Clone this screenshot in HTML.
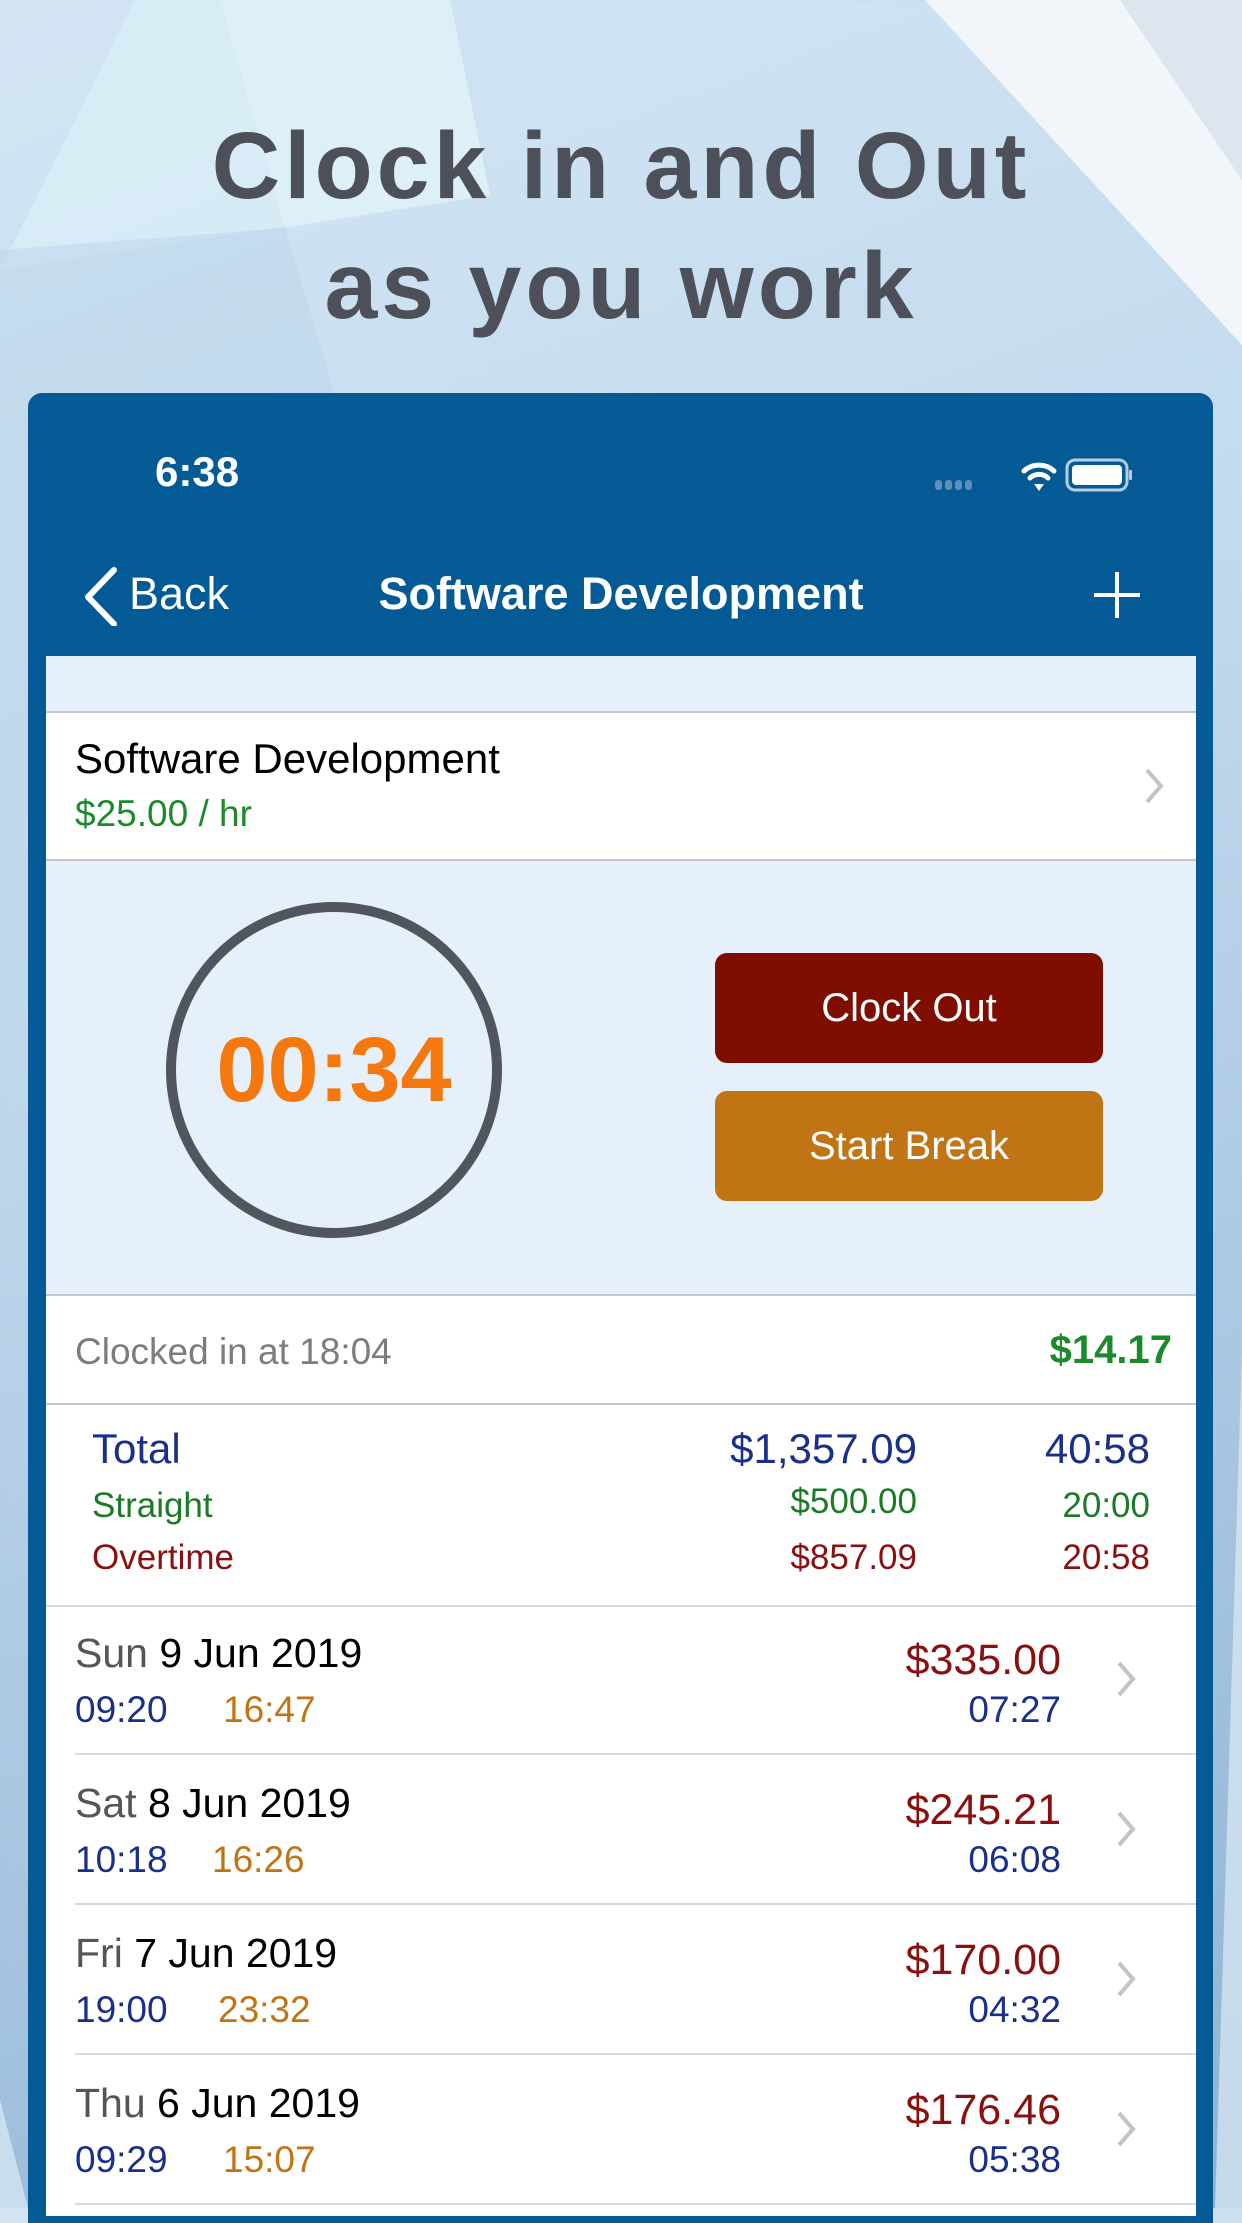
<!DOCTYPE html>
<html><head><meta charset="utf-8"><style>
*{margin:0;padding:0;box-sizing:border-box}
body{width:1242px;height:2208px;overflow:hidden;font-family:"Liberation Sans",sans-serif;position:relative;background:linear-gradient(160deg,#d3e5f3 0%,#c3dbef 35%,#a9c6e0 70%,#8fb3d4 100%)}
.abs{position:absolute}
.t{position:absolute;white-space:nowrap}
</style></head><body>
<svg class="abs" style="left:0;top:0" width="1242" height="2208">
<polygon points="0,270 135,0 450,0 490,195" fill="#d9edf6" opacity=".8"/>
<polygon points="220,0 450,0 490,195 285,228" fill="#e0f2f8" opacity=".7"/>
<polygon points="925,0 1120,0 1242,180 1242,345" fill="#f2f6fa"/>
<polygon points="1120,0 1242,0 1242,180" fill="#dde6ef"/>
<polygon points="285,228 500,950 0,1000 0,250" fill="#bcd6ec" opacity=".5"/>
<polygon points="1242,1350 1242,2208 1215,2208" fill="#e8f1f8" opacity=".6"/>
<polygon points="0,2100 28,2208 0,2208" fill="#e8f1f8" opacity=".6"/>
</svg>
<div class="t" style="left:0;width:1242px;text-align:center;top:106px;font-size:95px;font-weight:bold;color:#4d5058;letter-spacing:4px;line-height:120px">Clock in and Out<br>as you work</div>

<div class="abs" style="left:28px;top:393px;width:1185px;height:1830px;background:#035a94;border-radius:14px 14px 0 0"></div>
<div class="t" style="left:155px;top:448px;font-size:42px;font-weight:bold;color:#fff">6:38</div>
<svg class="abs" style="left:930px;top:455px" width="210" height="40">
<g fill="#5f8fb8"><rect x="5" y="25" width="7" height="10" rx="3"/><rect x="15" y="25" width="7" height="10" rx="3"/><rect x="25" y="25" width="7" height="10" rx="3"/><rect x="35" y="25" width="7" height="10" rx="3"/></g>
<g fill="none" stroke="#fff" stroke-width="5" stroke-linecap="round"><path d="M94 16 a22 22 0 0 1 30 0"/><path d="M100 23 a13 13 0 0 1 18 0"/></g>
<path d="M104 29 L114 29 L109 36 Z" fill="#fff"/>
<rect x="137" y="5" width="60" height="30" rx="8" fill="none" stroke="#b8cde0" stroke-width="3"/>
<rect x="142" y="10" width="50" height="20" rx="4" fill="#fff"/>
<rect x="199" y="15" width="3" height="10" rx="1" fill="#b8cde0"/>
</svg>
<svg class="abs" style="left:78px;top:566px" width="40" height="60"><path d="M36 4 L10 31 L36 58" fill="none" stroke="#fff" stroke-width="6" stroke-linecap="round" stroke-linejoin="round"/></svg>
<div class="t" style="left:129px;top:568px;font-size:45px;color:#fff">Back</div>
<div class="t" style="left:0;width:1242px;text-align:center;top:568px;font-size:45px;font-weight:bold;color:#fff">Software Development</div>
<svg class="abs" style="left:1092px;top:570px" width="50" height="50"><path d="M25 2V48M2 25H48" stroke="#fff" stroke-width="4"/></svg>

<div class="abs" style="left:46px;top:656px;width:1150px;height:1560px;background:#fff"></div>
<div class="abs" style="left:46px;top:656px;width:1150px;height:57px;background:#e6f0fa;border-bottom:2px solid #c8c8cc"></div>
<div class="t" style="left:75px;top:735px;font-size:42px;color:#000">Software Development</div>
<div class="t" style="left:75px;top:793px;font-size:37px;color:#1a8a2a">$25.00 / hr</div>
<svg class="abs" style="left:1143px;top:766px" width="24" height="40"><path d="M4 4 L18 20 L4 36" fill="none" stroke="#c4c4c8" stroke-width="4"/></svg>

<div class="abs" style="left:46px;top:859px;width:1150px;height:437px;background:#e6f0fa;border-top:2px solid #c8c8cc;border-bottom:2px solid #c8c8cc"></div>
<svg class="abs" style="left:160px;top:896px" width="348" height="348"><circle cx="174" cy="174" r="163" fill="none" stroke="#50555e" stroke-width="10"/></svg>
<div class="t" style="left:160px;width:348px;text-align:center;top:1018px;font-size:92px;font-weight:bold;color:#f5780f">00:34</div>
<div class="abs" style="left:715px;top:953px;width:388px;height:110px;background:#800e00;border-radius:12px;color:#fff;font-size:40px;text-align:center;line-height:110px">Clock Out</div>
<div class="abs" style="left:715px;top:1091px;width:388px;height:110px;background:#c07414;border-radius:12px;color:#fff;font-size:40px;text-align:center;line-height:110px">Start Break</div>

<div class="t" style="left:75px;top:1331px;font-size:37px;color:#7c7c80">Clocked in at 18:04</div>
<div class="t" style="right:70px;top:1328px;font-size:40px;font-weight:bold;color:#1a8a2a">$14.17</div>
<div class="abs" style="left:46px;top:1403px;width:1150px;height:2px;background:#c8c8cc"></div>

<div class="t" style="left:92px;top:1425px;font-size:42px;color:#1a2f8a">Total</div>
<div class="t" style="right:325px;top:1425px;font-size:42px;color:#1a2f8a">$1,357.09</div>
<div class="t" style="right:92px;top:1425px;font-size:42px;color:#1a2f8a">40:58</div>
<div class="t" style="left:92px;top:1486px;font-size:35px;color:#1a7a25">Straight</div>
<div class="t" style="right:325px;top:1482px;font-size:35px;color:#1a7a25">$500.00</div>
<div class="t" style="right:92px;top:1486px;font-size:35px;color:#1a7a25">20:00</div>
<div class="t" style="left:92px;top:1538px;font-size:35px;color:#8a1010">Overtime</div>
<div class="t" style="right:325px;top:1538px;font-size:35px;color:#8a1010">$857.09</div>
<div class="t" style="right:92px;top:1538px;font-size:35px;color:#8a1010">20:58</div>

<div class="abs" style="left:46px;top:1605px;width:1150px;height:2px;background:#dadade"></div>
<div class="abs" style="left:75px;top:1605px;width:1121px;height:600px">
 <div class="abs" style="left:0;top:0;width:1121px;height:150px;border-bottom:2px solid #dadade">
  <div class="t" style="left:0;top:25px;font-size:41px;color:#000"><span style="color:#555">Sun</span> 9 Jun 2019</div>
  <div class="t" style="left:0;top:84px;font-size:37px;color:#1a2f8a">09:20</div>
  <div class="t" style="left:148px;top:84px;font-size:37px;color:#c07414">16:47</div>
  <div class="t" style="right:135px;top:31px;font-size:43px;color:#8a1010">$335.00</div>
  <div class="t" style="right:135px;top:84px;font-size:37px;color:#1a2f8a">07:27</div>
  <svg class="abs" style="left:1040px;top:54px" width="24" height="40"><path d="M4 4 L18 20 L4 36" fill="none" stroke="#c4c4c8" stroke-width="4"/></svg>
 </div>
 <div class="abs" style="left:0;top:150px;width:1121px;height:150px;border-bottom:2px solid #dadade">
  <div class="t" style="left:0;top:25px;font-size:41px;color:#000"><span style="color:#555">Sat</span> 8 Jun 2019</div>
  <div class="t" style="left:0;top:84px;font-size:37px;color:#1a2f8a">10:18</div>
  <div class="t" style="left:137px;top:84px;font-size:37px;color:#c07414">16:26</div>
  <div class="t" style="right:135px;top:31px;font-size:43px;color:#8a1010">$245.21</div>
  <div class="t" style="right:135px;top:84px;font-size:37px;color:#1a2f8a">06:08</div>
  <svg class="abs" style="left:1040px;top:54px" width="24" height="40"><path d="M4 4 L18 20 L4 36" fill="none" stroke="#c4c4c8" stroke-width="4"/></svg>
 </div>
 <div class="abs" style="left:0;top:300px;width:1121px;height:150px;border-bottom:2px solid #dadade">
  <div class="t" style="left:0;top:25px;font-size:41px;color:#000"><span style="color:#555">Fri</span> 7 Jun 2019</div>
  <div class="t" style="left:0;top:84px;font-size:37px;color:#1a2f8a">19:00</div>
  <div class="t" style="left:143px;top:84px;font-size:37px;color:#c07414">23:32</div>
  <div class="t" style="right:135px;top:31px;font-size:43px;color:#8a1010">$170.00</div>
  <div class="t" style="right:135px;top:84px;font-size:37px;color:#1a2f8a">04:32</div>
  <svg class="abs" style="left:1040px;top:54px" width="24" height="40"><path d="M4 4 L18 20 L4 36" fill="none" stroke="#c4c4c8" stroke-width="4"/></svg>
 </div>
 <div class="abs" style="left:0;top:450px;width:1121px;height:150px;border-bottom:2px solid #dadade">
  <div class="t" style="left:0;top:25px;font-size:41px;color:#000"><span style="color:#555">Thu</span> 6 Jun 2019</div>
  <div class="t" style="left:0;top:84px;font-size:37px;color:#1a2f8a">09:29</div>
  <div class="t" style="left:148px;top:84px;font-size:37px;color:#c07414">15:07</div>
  <div class="t" style="right:135px;top:31px;font-size:43px;color:#8a1010">$176.46</div>
  <div class="t" style="right:135px;top:84px;font-size:37px;color:#1a2f8a">05:38</div>
  <svg class="abs" style="left:1040px;top:54px" width="24" height="40"><path d="M4 4 L18 20 L4 36" fill="none" stroke="#c4c4c8" stroke-width="4"/></svg>
 </div>
</div>
</body></html>
